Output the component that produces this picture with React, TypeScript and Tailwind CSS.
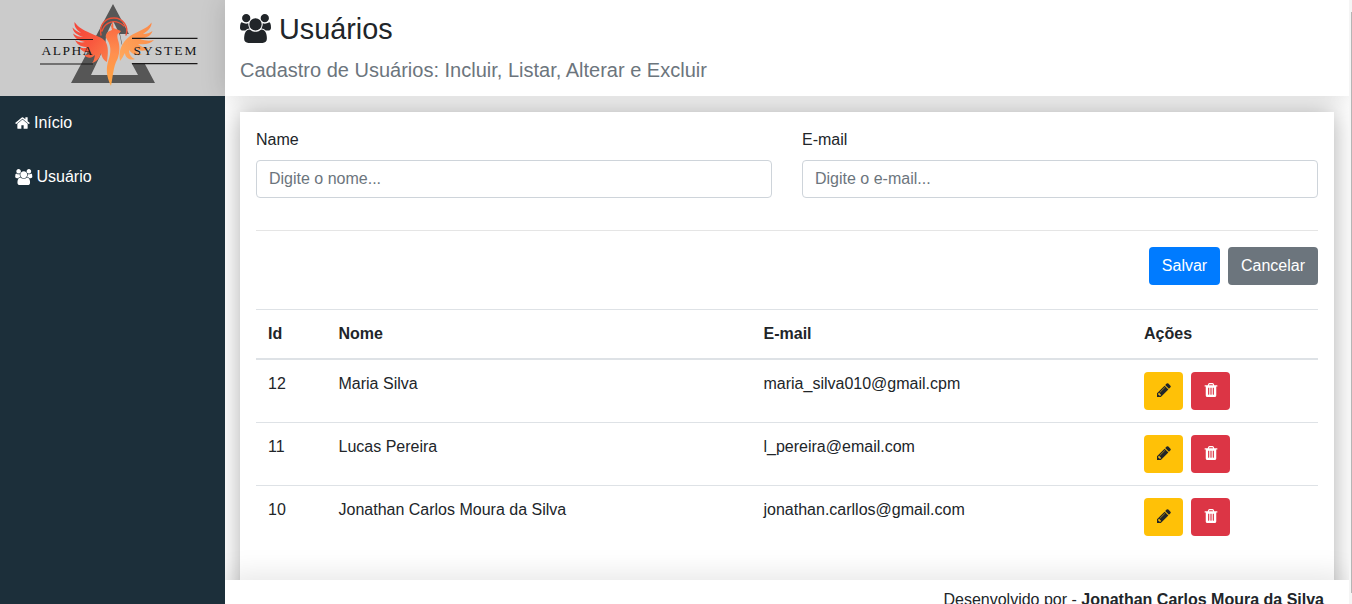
import React from "react";

const USERS_PATH =
  "M593 896q-162 5-265 128h-134q-82 0-138-40.5t-56-118.5q0-353 124-353 6 0 43.5 21t97.5 42.5 119 21.5q67 0 133-23-5 37-5 66 0 139 81 256zm1071 637q0 120-73 189.5t-194 69.5h-874q-121 0-194-69.5t-73-189.5q0-53 3.5-103.5t14-109 26.5-108.5 43-97.5 62-81 85.5-53.5 111.5-20q10 0 43 21.5t73 48 107 48 135 21.5 135-21.5 107-48 73-48 43-21.5q61 0 111.5 20t85.5 53.5 62 81 43 97.5 26.5 108.5 14 109 3.5 103.5zm-1024-1277q0 106-75 181t-181 75-181-75-75-181 75-181 181-75 181 75 75 181zm704 384q0 159-112.5 271.5t-271.5 112.5-271.5-112.5-112.5-271.5 112.5-271.5 271.5-112.5 271.5 112.5 112.5 271.5zm576 225q0 78-56 118.5t-138 40.5h-134q-103-123-265-128 81-117 81-256 0-29-5-66 66 23 133 23 59 0 119-21.5t97.5-42.5 43.5-21q124 0 124 353zm-128-609q0 106-75 181t-181 75-181-75-75-181 75-181 181-75 181 75 75 181z";
const HOME_PATH =
  "M1408 992v480q0 26-19 45t-45 19h-384v-384h-256v384h-384q-26 0-45-19t-19-45v-480q0-1 .5-3t.5-3l575-474 575 474q1 2 1 6zm223-69l-62 74q-8 9-21 11h-3q-13 0-21-7l-692-577-692 577q-12 8-24 7-13-2-21-11l-62-74q-8-10-7-23.5t11-21.5l719-599q32-26 76-26t76 26l244 204v-195q0-14 9-23t23-9h192q14 0 23 9t9 23v408l219 182q10 8 11 21.5t-7 23.5z";
const PENCIL_PATH =
  "M491 1536l91-91-235-235-91 91v107h128v128h107zm523-928q0-22-22-22-10 0-17 7l-542 542q-7 7-7 17 0 22 22 22 10 0 17-7l542-542q7-7 7-17zm-54-192l416 416-832 832h-416v-416zm683 96q0 53-37 90l-166 166-416-416 166-165q36-38 90-38 53 0 91 38l235 234q37 39 37 91z";
const TRASH_PATH =
  "M704 1376v-704q0-14-9-23t-23-9h-64q-14 0-23 9t-9 23v704q0 14 9 23t23 9h64q14 0 23-9t9-23zm256 0v-704q0-14-9-23t-23-9h-64q-14 0-23 9t-9 23v704q0 14 9 23t23 9h64q14 0 23-9t9-23zm256 0v-704q0-14-9-23t-23-9h-64q-14 0-23 9t-9 23v704q0 14 9 23t23 9h64q14 0 23-9t9-23zm-544-992h448l-48-117q-7-9-17-11h-317q-10 2-17 11zm928 32v64q0 14-9 23t-23 9h-96v948q0 83-47 143.5t-113 60.5h-832q-66 0-113-58.5t-47-141.5v-952h-96q-14 0-23-9t-9-23v-64q0-14 9-23t23-9h309l70-167q15-37 54-63t79-26h320q40 0 79 26t54 63l70 167h309q14 0 23 9t9 23z";

function Icon({ d, viewBox, className }: { d: string; viewBox: string; className: string }) {
  return (
    <svg viewBox={viewBox} fill="currentColor" className={className} aria-hidden="true">
      <path d={d} />
    </svg>
  );
}

function Logo() {
  return (
    <svg width="225" height="96" viewBox="0 0 225 96" className="block">
      <defs>
        <linearGradient id="leftWing" x1="0" y1="0" x2="1" y2="1">
          <stop offset="0" stopColor="#f4443a" />
          <stop offset="0.5" stopColor="#f8573e" />
          <stop offset="1" stopColor="#fb7f4a" />
        </linearGradient>
        <linearGradient id="rightWing" x1="0" y1="1" x2="1" y2="0">
          <stop offset="0" stopColor="#ffa95c" />
          <stop offset="1" stopColor="#fb8848" />
        </linearGradient>
        <linearGradient id="body" x1="0" y1="0" x2="0" y2="1">
          <stop offset="0" stopColor="#f9653f" />
          <stop offset="0.5" stopColor="#ff9050" />
          <stop offset="1" stopColor="#ffa63f" />
        </linearGradient>
      </defs>
      <path fill="#565656" fillRule="evenodd" d="M113 4 155 83H71Z M113 29 91 75H138Z" />
      <path fill="#cbcbcb" d="M106 36 109 29 113 21 117 29 120 36 125 62H104Z" />
      <path fill="#cbcbcb" d="M120 34H137L145 63H126Z" />
      <path
        fill="none"
        stroke="#ed5238"
        strokeWidth="1.4"
        strokeLinecap="round"
        d="M101 35C99 25 105 18 114 18C123 18 129 27 126 35M102 31C105 22 115 18 124 26"
      />
      <path
        fill="url(#leftWing)"
        d="M107 62C108 54 109 46 105 41C102 37 96 36 90 33C83 30 78 27 74.500 22C74 27 77 30 81 33C77 32 75 30 72.500 27.500C73 32 77 35 83 37C79 37 76 36 73 33.500C75 39 79 41 85 42C81 43 78 42 75 40C78 46 82 47 88 47C84 49 82 48 79 47C82 52 87 53 91 52C89 55 87 55 84 55C88 59 92 58 95 55C94 59 94 61 92 63C98 61 100 57 101 53C102 57 103 60 107 62Z"
      />
      <path
        fill="url(#rightWing)"
        d="M120 61C118 51 122 42 130 36C138 31 147 29 151.500 22.500C152 27 148 31 143 34C147 34 150 33 152.500 31C151 36 146 38 140 39C145 41 150 41 154 40C150 44 145 45 138 44C142 47 145 49 149 48C145 52 139 51 134 48C136 52 139 54 142 54C138 57 132 54 129 50C129 55 132 58 135 59C129 61 125 57 125 53C123 56 122 59 120 61Z"
      />
      <path
        fill="url(#body)"
        d="M106 35C107 31 110 31 112 30L111 26L113 22L113.500 28L116 29L121 31L119.500 33C117 33 117 36 118 40C120 46 120 52 117.500 59C113 67 113 77 111 86C106 76 106 68 108.500 60C111 53 111 47 108.500 42C107 39 105 37 106 35Z"
      />
      <path
        fill="none"
        stroke="#1b1919"
        strokeWidth="1.1"
        d="M40 39.500H93M40 64H93M132 38.400H197.500M132 63.600H197.500"
      />
      <g fill="#151515" fontFamily="Liberation Serif, serif" fontSize="13.500">
        <text x="41.500" y="55" textLength="51" lengthAdjust="spacing">ALPHA</text>
        <text x="133.500" y="55" textLength="63" lengthAdjust="spacing">SYSTEM</text>
      </g>
    </svg>
  );
}

const users = [
  { id: 12, name: "Maria Silva", email: "maria_silva010@gmail.cpm" },
  { id: 11, name: "Lucas Pereira", email: "l_pereira@email.com" },
  { id: 10, name: "Jonathan Carlos Moura da Silva", email: "jonathan.carllos@gmail.com" },
];

function Field({ label, placeholder }: { label: string; placeholder: string }) {
  return (
    <label className="flex flex-1 flex-col gap-2">
      <span>{label}</span>
      <input
        type="text"
        placeholder={placeholder}
        className="h-[38px] w-full rounded border border-[#ced4da] bg-white px-3 placeholder:text-[#6c757d]"
      />
    </label>
  );
}

export default function App() {
  return (
    <div className="flex h-[604px] w-[1352px] overflow-hidden bg-white font-['Liberation_Sans',Arial,sans-serif] text-base text-[#212529]">
      <aside className="flex w-[225px] shrink-0 flex-col">
        <div className="h-24 bg-[#cbcbcb]">
          <Logo />
        </div>
        <nav className="relative z-20 flex flex-1 flex-col bg-[#1c2f3a] text-white">
          <a className="flex h-[54px] items-center gap-1 px-[15px]">
            <Icon d={HOME_PATH} viewBox="0 0 1664 1792" className="h-4 w-[15px]" />
            Início
          </a>
          <a className="flex h-[54px] items-center gap-1 px-[15px]">
            <Icon d={USERS_PATH} viewBox="0 0 1920 1792" className="h-4 w-[17.5px]" />
            Usuário
          </a>
        </nav>
      </aside>

      <div className="flex w-[1124px] shrink-0 flex-col">
        <header className="relative h-24 shrink-0 bg-white px-[15px] pt-3 shadow-[0_0_24px_rgba(0,0,0,0.15)]">
          <h1 className="flex h-[34px] items-center gap-2 text-[28.8px] leading-[34px]">
            <Icon d={USERS_PATH} viewBox="0 0 1920 1792" className="mb-px h-[29px] w-[31px]" />
            Usuários
          </h1>
          <p className="mt-[9px] text-xl leading-[30px] text-[#6c757d]">
            Cadastro de Usuários: Incluir, Listar, Alterar e Excluir
          </p>
        </header>

        <main className="relative min-h-0 flex-1 overflow-hidden px-[15px] pt-4">
          <section className="h-[500px] bg-white p-4 shadow-[0_0_24px_rgba(0,0,0,0.32)]">
            <div className="flex gap-[30px]">
              <Field label="Name" placeholder="Digite o nome..." />
              <Field label="E-mail" placeholder="Digite o e-mail..." />
            </div>
            <hr className="mt-8 border-black/10" />
            <div className="mt-4 flex justify-end gap-2 text-white">
              <button className="h-[38px] w-[71px] rounded bg-[#007bff]">Salvar</button>
              <button className="h-[38px] w-[90px] rounded bg-[#6c757d]">Cancelar</button>
            </div>
            <table className="mt-6 w-full table-fixed border-separate border-spacing-0 text-left">
              <colgroup>
                <col className="w-[70.5px]" />
                <col className="w-[425px]" />
                <col className="w-[380.5px]" />
                <col />
              </colgroup>
              <thead>
                <tr>
                  {["Id", "Nome", "E-mail", "Ações"].map((title) => (
                    <th key={title} className="border-t border-b-2 border-[#dee2e6] p-3 font-bold">
                      {title}
                    </th>
                  ))}
                </tr>
              </thead>
              <tbody className="[&>tr+tr>td]:border-t">
                {users.map((user) => (
                  <tr key={user.id} className="align-top">
                    <td className="border-[#dee2e6] p-3">{user.id}</td>
                    <td className="border-[#dee2e6] p-3">{user.name}</td>
                    <td className="border-[#dee2e6] p-3">{user.email}</td>
                    <td className="border-[#dee2e6] p-3">
                      <div className="flex gap-2">
                        <button aria-label="Alterar" className="flex h-[38px] w-[39px] items-center justify-center rounded bg-[#ffc107] pb-0.5">
                          <Icon d={PENCIL_PATH} viewBox="128 128 1536 1536" className="size-3.5" />
                        </button>
                        <button aria-label="Excluir" className="flex h-[38px] w-[39px] items-center justify-center rounded bg-[#dc3545] pb-0.5 text-white">
                          <Icon d={TRASH_PATH} viewBox="128 128 1536 1536" className="size-3.5" />
                        </button>
                      </div>
                    </td>
                  </tr>
                ))}
              </tbody>
            </table>
          </section>
        </main>

        <footer className="z-10 h-6 shrink-0 bg-white pr-[25px] pt-2 text-right shadow-[0_0_32px_rgba(0,0,0,0.15)]">
          Desenvolvido por - <strong>Jonathan Carlos Moura da Silva</strong>
        </footer>
      </div>

      <div className="z-20 flex flex-1 flex-col items-end bg-[#f5f5f5]">
        <div className="mt-3 h-[581px] w-px bg-[#b5b5b5]" />
      </div>
    </div>
  );
}
